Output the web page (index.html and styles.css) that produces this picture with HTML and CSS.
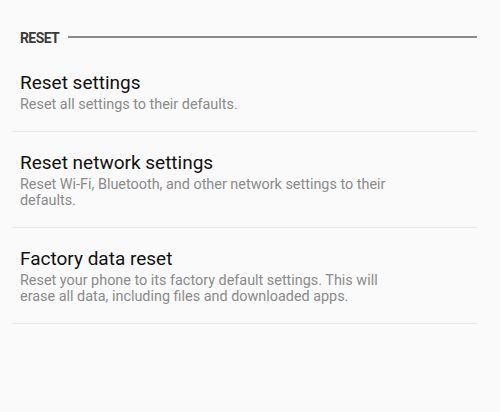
FILE: index.html
```html
<!DOCTYPE html>
<html>
<head>
<meta charset="utf-8">
<link rel="stylesheet" href="styles.css">
</head>
<body>
<div class="screen">
  <div class="section-header">
    <span class="section-title">RESET</span>
    <span class="section-line"></span>
  </div>
  <div class="list">
    <div class="item first">
      <div class="item-title">Reset settings</div>
      <div class="item-sub">Reset all settings to their defaults.</div>
    </div>
    <div class="item">
      <div class="item-title">Reset network settings</div>
      <div class="item-sub">Reset Wi-Fi, Bluetooth, and other network settings to their defaults.</div>
    </div>
    <div class="item">
      <div class="item-title">Factory data reset</div>
      <div class="item-sub">Reset your phone to its factory default settings. This will erase all data, including files and downloaded apps.</div>
    </div>
  </div>
</div>
</body>
</html>
```
FILE: styles.css
```css
html, body {
  margin: 0;
  padding: 0;
  background: #fafafa;
}
.screen {
  width: 500px;
  height: 412px;
  font-family: Roboto, "Liberation Sans", sans-serif;
  padding: 30px 23px 0 12px;
  box-sizing: border-box;
}
.section-header {
  display: flex;
  align-items: center;
  padding-left: 8px;
  height: 16px;
}
.section-title {
  font-size: 14px;
  line-height: 16px;
  font-weight: 700;
  color: #3a3a3a;
  letter-spacing: -0.6px;
}
.section-line {
  flex: 1;
  height: 2px;
  background: #8a8a8a;
  margin-left: 9px;
  margin-top: -2px;
}
.list {
  display: flex;
  flex-direction: column;
}
.item {
  padding: 21px 8px 18px 8px;
  border-bottom: 1px solid #e8e8e8;
}
.item.first {
  padding-top: 27px;
  padding-bottom: 18px;
}
.item-title {
  font-size: 19px;
  line-height: 20px;
  color: #111;
}
.item-sub {
  margin-top: 4px;
  font-size: 14.4px;
  line-height: 16px;
  color: #8a8a8a;
  padding-right: 60px;
}
```
